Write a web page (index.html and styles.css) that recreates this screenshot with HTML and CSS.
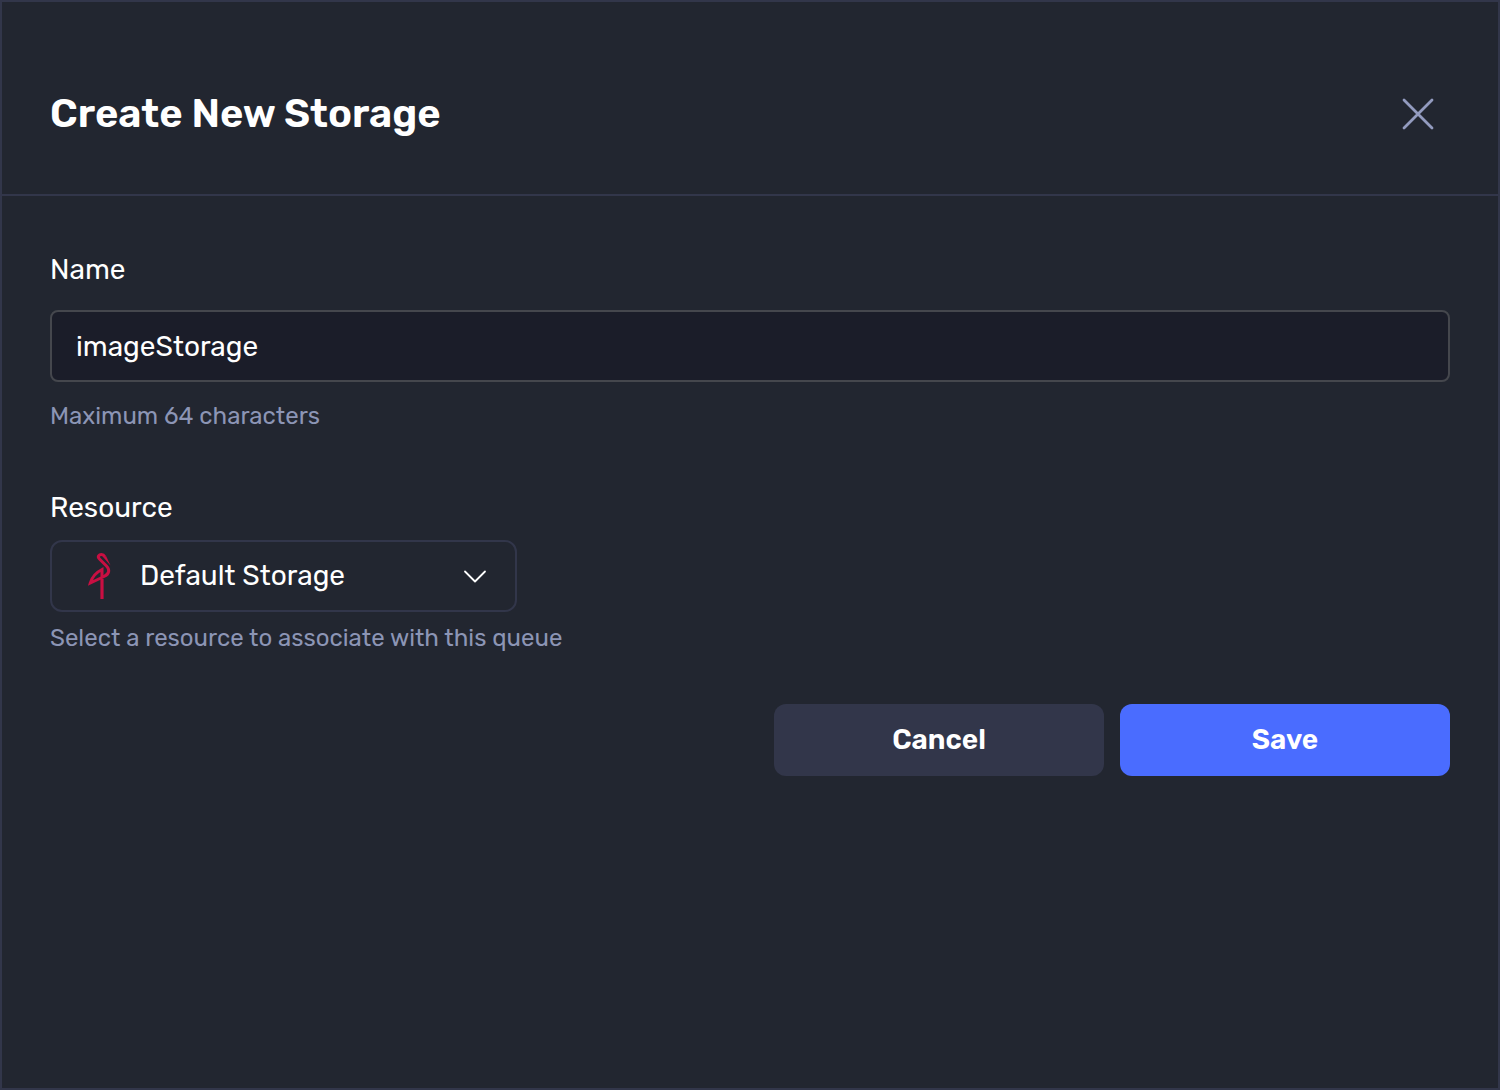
FILE: index.html
```html
<!DOCTYPE html>
<html lang="en">
<head>
<meta charset="utf-8">
<meta name="viewport" content="width=device-width, initial-scale=1">
<title>Create New Storage</title>
<link rel="stylesheet" href="styles.css">
</head>
<body>
<main class="dialog" role="dialog" aria-labelledby="dialog-title">
  <header class="dialog-header">
    <h1 class="dialog-title" id="dialog-title">Create New Storage</h1>
    <button class="close" type="button" aria-label="Close">
      <svg width="32" height="32" viewBox="0 0 32 32" fill="none" stroke="currentColor" stroke-width="2.8" stroke-linecap="round"><path d="M2 2 30 30M30 2 2 30"/></svg>
    </button>
  </header>
  <form class="dialog-body">
    <div class="field">
      <label class="label" for="name">Name</label>
      <input class="input" id="name" type="text" maxlength="64" value="imageStorage" aria-describedby="name-hint">
      <p class="hint name-hint" id="name-hint">Maximum 64 characters</p>
    </div>
    <div class="field">
      <label class="label resource-label" for="resource">Resource</label>
      <div class="select-box">
        <select class="select" id="resource" aria-describedby="resource-hint">
          <option>Default Storage</option>
        </select>
        <svg class="select-logo" width="24" height="46" viewBox="0 0 24 46" fill="none" aria-hidden="true"><path d="M15 26V46" stroke="#c90f42" stroke-width="3.200"/><path d="M15 25V16.500C10 19 5 24 3.300 30L17 23.500C22.500 21 23 16.500 19.500 13L12.500 6C10 3.500 12 1.500 14.500 1.500C16 1.500 17 2.300 18 4" stroke="#c90f42" stroke-width="3"/><path d="M16.500 4.500 19.200 3.200 23.500 12.500Z" fill="#c90f42"/></svg>
        <svg class="select-arrow" width="24" height="14" viewBox="0 0 24 14" fill="none" stroke="#fff" stroke-width="1.800" stroke-linecap="round" stroke-linejoin="round" aria-hidden="true"><path d="M2 2.500 12 12.500 22 2.500"/></svg>
      </div>
      <p class="hint resource-hint" id="resource-hint">Select a resource to associate with this queue</p>
    </div>
    <div class="actions">
      <button class="button cancel" type="button">Cancel</button>
      <button class="button save" type="submit">Save</button>
    </div>
  </form>
</main>
</body>
</html>
```
FILE: styles.css
```css
*,
*::before,
*::after {
  box-sizing: border-box;
}

body {
  margin: 0;
  background: #222630;
  color: #fff;
  font-family: Rubik, Roboto, sans-serif;
  font-size: 28px;
  line-height: 32px;
}

.dialog {
  min-height: 100vh;
  border: 2px solid #32364a;
}

.dialog-header {
  display: flex;
  align-items: center;
  justify-content: space-between;
  padding: 80px 56px 48px 48px;
  border-bottom: 2px solid #32364a;
}

.dialog-title {
  margin: 0;
  font-size: 40px;
  font-weight: 600;
  line-height: 64px;
}

.close {
  display: flex;
  padding: 8px;
  border: 0;
  background: none;
  color: #939bbf;
  cursor: pointer;
}

.dialog-body {
  display: flex;
  flex-direction: column;
  padding: 58px 48px 48px;
}

.field {
  display: flex;
  flex-direction: column;
}

.field + .field {
  margin-top: 62px;
}

.label {
  margin-bottom: 24px;
}

.resource-label {
  margin-bottom: 16px;
}

.input,
.select {
  height: 72px;
  color: inherit;
  font: inherit;
}

.input {
  width: 100%;
  padding: 0 24px;
  border: 2px solid #45474d;
  border-radius: 8px;
  background: #1b1d29;
}

.hint {
  margin: 0;
  color: #8c95b5;
  font-size: 24px;
  line-height: 28px;
}

.name-hint {
  margin-top: 20px;
}

.resource-hint {
  margin-top: 12px;
}

.select-box {
  display: grid;
  align-items: center;
  width: 467px;
  max-width: 100%;
}

.select-box > * {
  grid-area: 1 / 1;
}

.select {
  width: 100%;
  padding: 0 64px 0 88px;
  border: 2px solid #32364a;
  border-radius: 12px;
  background: none;
  appearance: none;
}

.select-logo,
.select-arrow {
  pointer-events: none;
}

.select-logo {
  margin-left: 37px;
}

.select-arrow {
  justify-self: end;
  margin-right: 30px;
}

.actions {
  display: flex;
  justify-content: flex-end;
  gap: 16px;
  margin-top: 52px;
}

.button {
  width: 330px;
  height: 72px;
  border: 0;
  border-radius: 12px;
  color: #fff;
  font: inherit;
  font-weight: 600;
  cursor: pointer;
}

.cancel {
  background: #32364a;
}

.save {
  background: #4a6cff;
}
```
